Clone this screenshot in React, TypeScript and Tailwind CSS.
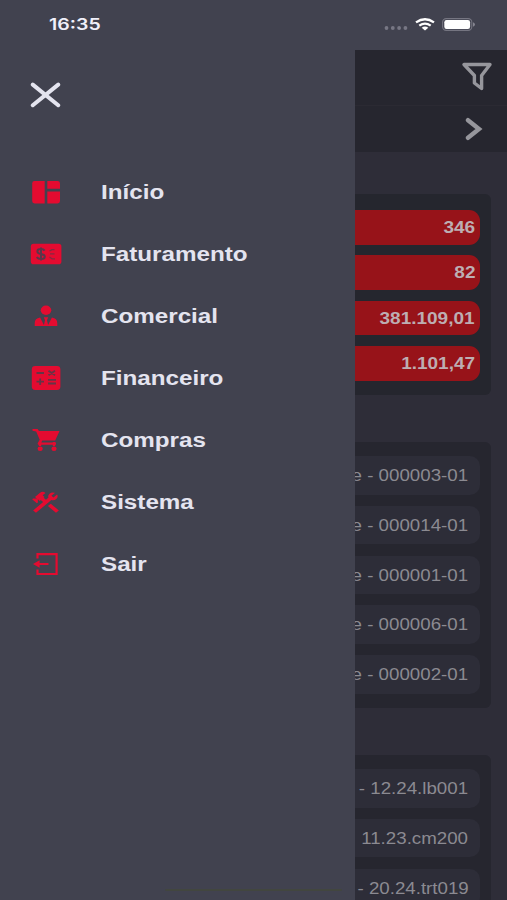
import React from "react";
import { MdConstruction } from "react-icons/md";

const stroke = { fill: "none", stroke: "currentColor" } as const;

function DashboardIcon() {
  return (
    <svg viewBox="0 0 30 24" className="h-6 w-[30px]" fill="currentColor">
      <path d="M3.5 1H13.7V23.4H3.5Q1.2 23.4 1.2 21V3.4Q1.2 1 3.5 1Z" />
      <path d="M16.3 1H26.6Q29 1 29 3.4V8.8H16.3Z" />
      <path d="M16.3 11.4H29V21Q29 23.4 26.6 23.4H16.3Z" />
    </svg>
  );
}

function MoneyIcon() {
  return (
    <svg viewBox="0 0 32 22" className="h-[22px] w-8">
      <rect x="0.8" y="0.8" width="30.6" height="20.4" rx="2.8" fill="currentColor" />
      <g fill="none" stroke="#59374a" strokeWidth="2">
        <path d="M14.6 7.6Q13.6 6.1 10.8 6.1Q7.4 6.1 7.4 8.4Q7.4 10.5 11 10.9Q14.8 11.4 14.8 13.7Q14.8 16 11 16Q8 16 6.7 14.2M11 4.5V17.5" />
        <path d="M19.5 8L22 6.6H24.5M24.5 10.8H20M19.5 14L22 15.8H25" strokeWidth="1.3" opacity=".7" />
      </g>
    </svg>
  );
}

function PersonIcon() {
  return (
    <svg viewBox="0 0 24 22" className="h-[22px] w-6" fill="currentColor">
      <ellipse cx="12" cy="5.3" rx="5.3" ry="4.7" />
      <path d="M.7 21V18.2Q.7 13.4 6.1 12.5L9.9 20.1L11 15.2L9.8 12.3H14.2L13 15.2L14.1 20.1L17.9 12.5Q23.3 13.4 23.3 18.2V21Z" />
    </svg>
  );
}

function CalculatorIcon() {
  return (
    <svg viewBox="0 0 30 26" className="h-[26px] w-[30px]">
      <rect x="0.8" y="1" width="28.6" height="24" rx="3.4" fill="currentColor" />
      <path d="M5.5 8H13M17.5 5.7L24 10.3M24 5.7L17.5 10.3M5.5 16.7H13M9.2 13.4V20M17 14.8H25M17 18.5H25" fill="none" stroke="#633547" strokeWidth="1.8" />
    </svg>
  );
}

function CartIcon() {
  return (
    <svg viewBox="0 0 28 24" className="h-6 w-7" fill="currentColor">
      <path d="M.5 1H5.6L7 3.1H27.5L23.2 12.6H10.3L9.2 14.5H24V16.8H6.1L5.6 15.6L7.7 11.8L4.2 3.5L.5 2.7Z" />
      <path d="M8 14V18M22 14V18" stroke="currentColor" strokeWidth="2.4" />
      <ellipse cx="8.2" cy="20.8" rx="2.6" ry="2.2" />
      <ellipse cx="22" cy="20.8" rx="2.6" ry="2.2" />
    </svg>
  );
}

function ExitIcon() {
  return (
    <svg viewBox="0 0 26 24" className="h-6 w-[26px]">
      <path d="M4.5 6.5V2.2H23.6V22H4.5V17.5M3 12H15.5" {...stroke} strokeWidth="2.2" />
      <path d="M0 12L6.6 8.2V15.8Z" fill="currentColor" />
    </svg>
  );
}

const menu = [
  { label: "Início", icon: <DashboardIcon /> },
  { label: "Faturamento", icon: <MoneyIcon /> },
  { label: "Comercial", icon: <PersonIcon /> },
  { label: "Financeiro", icon: <CalculatorIcon /> },
  { label: "Compras", icon: <CartIcon /> },
  { label: "Sistema", icon: <MdConstruction className="h-[27px] w-[27px] scale-x-[1.2]" /> },
  { label: "Sair", icon: <ExitIcon /> },
];

const totals = ["346", "82", "381.109,01", "1.101,47"];
const clients = ["e - 000003-01", "e - 000014-01", "e - 000001-01", "e - 000006-01", "e - 000002-01"];
const products = ["- 12.24.lb001", "11.23.cm200", "- 20.24.trt019"];

function ListCard({ items, className }: { items: string[]; className: string }) {
  return (
    <section className={`mr-4 flex shrink-0 flex-col gap-[11.3px] rounded-r-md bg-[#26262f] pt-[14px] pr-[11px] ${className}`}>
      {items.map((t) => (
        <div key={t} className="flex h-[38.5px] shrink-0 items-center justify-end rounded-r-[10px] bg-[#2d2d38] pt-px pr-[11.5px] text-[15.6px] text-[#8b8a91]">
          <span className="origin-right scale-x-[1.2] whitespace-nowrap">{t}</span>
        </div>
      ))}
    </section>
  );
}

export default function App() {
  return (
    <div className="flex h-[900px] w-[507px] flex-col overflow-hidden bg-[#41424f] font-['Liberation_Sans',Arial,sans-serif]">
      <header className="flex h-[50px] shrink-0 items-center justify-between pr-[32px] pl-[49px]">
        <span className="mb-[2px] origin-left scale-x-[1.22] font-['Inter',sans-serif] text-[16px] font-semibold text-[#f0f0fa]">16:35</span>
        <div className="mb-[2px] flex items-center">
          <svg viewBox="0 0 24 6" className="mt-[8px] mr-[7px] h-[6px] w-6" fill="#777784">
            <circle cx="2.5" cy="3" r="1.9" />
            <circle cx="8.8" cy="3" r="1.9" />
            <circle cx="15.1" cy="3" r="1.9" />
            <circle cx="21.4" cy="3" r="1.9" />
          </svg>
          <svg viewBox="0 0 20 13" className="mr-[7px] h-[13px] w-5" fill="none" stroke="#fff" strokeWidth="2.3">
            <path d="M1 4.4Q10 -1.9 19 4.4M4.3 7.6Q10 3.6 15.7 7.6" />
            <path d="M6.7 9.7Q10 7.5 13.3 9.7L10 12.6Z" fill="#fff" stroke="none" />
          </svg>
          <svg viewBox="0 0 33 13" className="h-[13px] w-[33px]">
            <rect x="0.6" y="0.6" width="29.2" height="11.8" rx="3.6" fill="none" stroke="#757581" strokeWidth="1.1" />
            <rect x="2.3" y="2" width="25.8" height="9" rx="2.2" fill="#fff" />
            <path d="M31 4.2Q33 5 33 6.5Q33 8 31 8.8Z" fill="#858590" />
          </svg>
        </div>
      </header>

      <div className="flex min-h-0 flex-1">
        <aside className="flex w-[355px] shrink-0 flex-col">
          <button className="mt-[32px] ml-[30px] h-[26px] w-[31px] text-[#e4e4ef]" aria-label="Fechar">
            <svg viewBox="0 0 31 26" className="h-full w-full" {...stroke} strokeWidth="4" strokeLinecap="round">
              <path d="M2.8 2.6L28.2 23.2M28.2 2.6L2.8 23.2" />
            </svg>
          </button>
          <nav className="mt-[53px] flex flex-col">
            {menu.map((m) => (
              <a key={m.label} className="flex h-[62px] items-center">
                <span className="ml-[29.5px] flex w-8 justify-center text-[#e40b30]">{m.icon}</span>
                <span className="ml-[39.5px] origin-left scale-x-[1.21] text-[20px] font-bold text-[#e4e4ef]">{m.label}</span>
              </a>
            ))}
          </nav>
          <div className="mt-auto mb-[9px] ml-[165px] h-[2px] w-[177px] rounded-full bg-[#42463f]" />
        </aside>

        <main className="flex min-w-0 flex-1 flex-col overflow-hidden bg-[#2e2d38]">
          <div className="flex h-[56px] shrink-0 items-center justify-end border-b border-[#2b2a33] bg-[#26262f] pr-[14px]">
            <svg viewBox="0 0 32 30" className="mb-[3px] h-[30px] w-8 text-[#96969c]" {...stroke} strokeWidth="3.4" strokeLinejoin="round">
              <path d="M3 3.5H29L20.6 14.5V27.5L13.4 22V14.5Z" />
            </svg>
          </div>
          <div className="flex h-[46px] shrink-0 items-center justify-end bg-[#26262f] pr-[24px]">
            <svg viewBox="0 0 18 24" className="h-6 w-[18px] text-[#96969c]" {...stroke} strokeWidth="4.4" strokeLinecap="round">
              <path d="M3 3.2L14 12L3 20.8" />
            </svg>
          </div>

          <section className="mt-[42px] mr-4 flex h-[201px] shrink-0 flex-col gap-[10.8px] rounded-r-md bg-[#25262e] pt-4 pr-[11px]">
            {totals.map((t) => (
              <div key={t} className="flex h-[34.6px] shrink-0 items-center justify-end rounded-r-[11px] bg-[#971319] pt-px pr-[5px] text-[15.7px] font-bold text-[#bdaeb2]">
                <span className="origin-right scale-x-[1.21] whitespace-nowrap">{t}</span>
              </div>
            ))}
          </section>
          <ListCard items={clients} className="mt-[47px] h-[266px]" />
          <ListCard items={products} className="mt-[47px] h-[200px]" />
        </main>
      </div>
    </div>
  );
}
